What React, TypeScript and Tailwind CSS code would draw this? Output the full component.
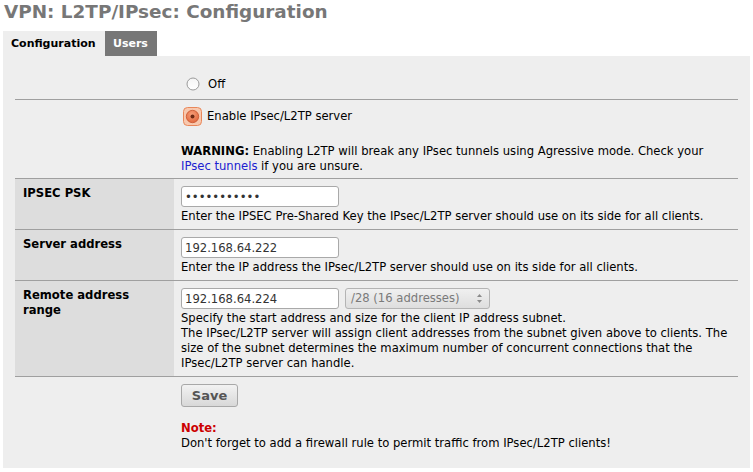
import React from 'react';

function RadioOff() {
  return (
    <svg width="14" height="14" viewBox="0 0 14 14" className="shrink-0">
      <defs>
        <linearGradient id="offg" x1="0" y1="0" x2="0" y2="1">
          <stop offset="0" stopColor="#f4f4f4" />
          <stop offset="1" stopColor="#ffffff" />
        </linearGradient>
      </defs>
      <circle cx="7" cy="7" r="6" fill="url(#offg)" stroke="#9a9a9a" strokeWidth="1" />
    </svg>
  );
}

function RadioOn() {
  return (
    <svg width="19" height="19" viewBox="0 0 19 19" className="shrink-0">
      <defs>
        <radialGradient id="ong" cx="0.45" cy="0.35" r="0.7">
          <stop offset="0" stopColor="#f7a07a" />
          <stop offset="1" stopColor="#e0643a" />
        </radialGradient>
      </defs>
      <rect x="0.5" y="0.5" width="18" height="18" rx="4" fill="#f8c8ae" stroke="#e8875a" />
      <circle cx="9.5" cy="9.5" r="6.2" fill="url(#ong)" stroke="#c8552e" strokeWidth="0.8" />
      <circle cx="9.5" cy="9.5" r="2" fill="#6e2a14" />
    </svg>
  );
}

function TextInput({ value, type = 'text' }: { value: string; type?: string }) {
  return (
    <input
      type={type}
      defaultValue={value}
      className="block h-[21px] w-[158px] rounded-[3px] border border-[#a9a9a9] bg-white px-[3px] text-[11.6px] text-[#333] outline-none"
    />
  );
}

function Row({
  label,
  children,
  shaded,
  pb = 'pb-[5px]'
}: {
  label?: React.ReactNode;
  children: React.ReactNode;
  shaded?: boolean;
  pb?: string;
}) {
  return (
    <div className="grid grid-cols-[159px_1fr] border-b border-[#9f9f9f]">
      <div className={`px-2 pt-[7px] font-bold ${shaded ? 'bg-[#dddddd]' : ''}`}>
        {label}
      </div>
      <div className={`px-[7px] pt-[7px] ${pb}`}>{children}</div>
    </div>
  );
}

export default function App() {
  return (
    <div className="h-[472px] w-[753px] bg-white font-['DejaVu_Sans',sans-serif] text-[11.6px] leading-[15px] text-black">
      <h1 className="pl-1 pt-[1px] text-[18.4px] font-bold leading-[22px] text-[#777777]">
        VPN: L2TP/IPsec: Configuration
      </h1>

      {/* Tabs */}
      <div className="mt-[8px] ml-[3px] flex h-[25px] text-[11px]">
        <div className="flex w-[102px] items-center bg-[#eeeeee] pl-2 font-bold">Configuration</div>
        <div className="flex w-[52px] items-center bg-[#777777] pl-2 font-bold text-white">Users</div>
      </div>

      <div className="mx-[3px] h-[412px] bg-[#eeeeee] px-3 pt-3">
        <Row pb="pb-[6px]">
          <div className="flex h-[18px] items-center gap-[8px] pl-[5px]">
            <RadioOff />
            <span>Off</span>
          </div>
        </Row>

        <Row pb="pb-[4px]">
          <div className="flex h-[19px] items-center gap-[5px] pl-[2px]">
            <RadioOn />
            <span>Enable IPsec/L2TP server</span>
          </div>
          <p className="mt-[18px] pr-6">
            <b>WARNING:</b> Enabling L2TP will break any IPsec tunnels using Agressive mode. Check your{' '}
            <span className="text-[#2020d0]">IPsec tunnels</span> if you are unsure.
          </p>
        </Row>

        <Row label="IPSEC PSK" shaded>
          <TextInput type="password" value="abcdefghijk" />
          <p className="mt-[2px]">
            Enter the IPSEC Pre-Shared Key the IPsec/L2TP server should use on its side for all clients.
          </p>
        </Row>

        <Row label="Server address" shaded>
          <TextInput value="192.168.64.222" />
          <p className="mt-[2px]">Enter the IP address the IPsec/L2TP server should use on its side for all clients.</p>
        </Row>

        <Row label={<span className="block w-[110px]">Remote address range</span>} shaded>
          <div className="flex gap-[6px]">
            <TextInput value="192.168.64.224" />
            <div className="flex h-[21px] w-[145px] items-center justify-between rounded-[3px] border border-[#b4b4b4] bg-gradient-to-b from-[#f0f0f0] to-[#dedede] pl-[5px] pr-[6px] text-[#7a7a7a]">
              <span>/28 (16 addresses)</span>
              <svg width="7" height="11" viewBox="0 0 7 11">
                <path d="M3.5 1 L6 4 L1 4 Z" fill="#8a8a8a" />
                <path d="M3.5 10 L6 7 L1 7 Z" fill="#8a8a8a" />
              </svg>
            </div>
          </div>
          <p className="mt-[2px]">
            Specify the start address and size for the client IP address subnet.
            <br />
            The IPsec/L2TP server will assign client addresses from the subnet given above to clients. The size of the
            subnet determines the maximum number of concurrent connections that the IPsec/L2TP server can handle.
          </p>
        </Row>

        <div className="grid grid-cols-[159px_1fr]">
          <div />
          <div className="px-[7px] pt-[7px]">
            <button className="flex h-[23px] w-[57px] items-center justify-center rounded-[3px] border border-[#a8a8a8] bg-gradient-to-b from-[#f2f2f2] to-[#d8d8d8] text-[13px] font-bold text-[#555]">
              Save
            </button>
            <p className="mt-[14px]">
              <b className="text-[#cc0000]">Note:</b>
              <br />
              Don't forget to add a firewall rule to permit traffic from IPsec/L2TP clients!
            </p>
          </div>
        </div>
      </div>
    </div>
  );
}
